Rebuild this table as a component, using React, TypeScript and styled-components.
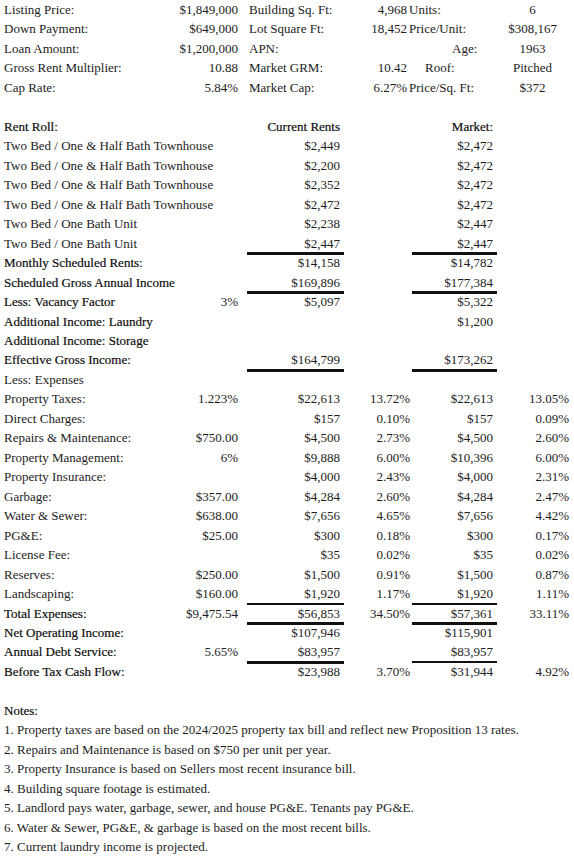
import React from 'react';
import styled, { createGlobalStyle } from 'styled-components';

const GlobalStyle = createGlobalStyle`
  html, body {
    margin: 0;
    padding: 0;
    background: #fff;
  }
  body {
    font-family: 'Liberation Serif', 'Times New Roman', serif;
    font-size: 13px;
    color: #1c1c1c;
  }
`;

const ROW_H = '19.48px';

const Page = styled.div`
  width: 574px;
  display: flex;
  flex-direction: column;
`;

const SummaryRow = styled.div`
  display: grid;
  grid-template-columns: 170px 77px 98px 62px 90px 77px;
  height: ${ROW_H};
`;

const Row = styled.div`
  display: grid;
  grid-template-columns: 170px 77px 97px 68px 85px 77px;
  height: ${ROW_H};
`;

const Blank = styled.div`
  height: ${ROW_H};
`;

type CellProps = {
  $align?: 'left' | 'right' | 'center';
  $padL?: number;
  $padR?: number;
  $bar?: number;
  $strong?: boolean;
  $span?: number;
};

const Cell = styled.div<CellProps>`
  grid-column: span ${p => p.$span ?? 1};
  line-height: ${ROW_H};
  white-space: nowrap;
  text-align: ${p => p.$align ?? 'left'};
  padding-left: ${p => p.$padL ?? 0}px;
  padding-right: ${p => p.$padR ?? 0}px;
  box-sizing: border-box;
  color: ${p => (p.$strong ? '#0d0d0d' : 'inherit')};
  -webkit-text-stroke: ${p => (p.$strong ? '0.2px currentColor' : '0')};
  box-shadow: ${p =>
    p.$bar
      ? `0 -${Math.floor(p.$bar / 2)}px 0 #111, inset 0 ${Math.ceil(p.$bar / 2)}px 0 #111`
      : 'none'};
`;

const Label = (props: { children?: React.ReactNode; strong?: boolean }) => (
  <Cell $padL={4} $strong={props.strong}>
    {props.children}
  </Cell>
);

type Summary = [string, string, string, string, string, string, number?];

const summary: Summary[] = [
  ['Listing Price:', '$1,849,000', 'Building Sq. Ft:', '4,968', 'Units:', '6'],
  ['Down Payment:', '$649,000', 'Lot Square Ft:', '18,452', 'Price/Unit:', '$308,167'],
  ['Loan Amount:', '$1,200,000', 'APN:', '', 'Age:', '1963', 45],
  ['Gross Rent Multiplier:', '10.88', 'Market GRM:', '10.42', 'Roof:', 'Pitched', 18],
  ['Cap Rate:', '5.84%', 'Market Cap:', '6.27%', 'Price/Sq. Ft:', '$372'],
];

type Line = {
  label: string;
  strong?: boolean;
  input?: string;
  cur?: string;
  curPct?: string;
  mkt?: string;
  mktPct?: string;
  curBar?: number;
  mktBar?: number;
};

const townhouse = 'Two Bed / One & Half Bath Townhouse';
const oneBath = 'Two Bed / One Bath Unit';

const lines: Line[] = [
  { label: townhouse, cur: '$2,449', mkt: '$2,472' },
  { label: townhouse, cur: '$2,200', mkt: '$2,472' },
  { label: townhouse, cur: '$2,352', mkt: '$2,472' },
  { label: townhouse, cur: '$2,472', mkt: '$2,472' },
  { label: oneBath, cur: '$2,238', mkt: '$2,447' },
  { label: oneBath, cur: '$2,447', mkt: '$2,447' },
  { label: 'Monthly Scheduled Rents:', strong: true, cur: '$14,158', mkt: '$14,782', curBar: 3, mktBar: 3 },
  { label: 'Scheduled Gross Annual Income', strong: true, cur: '$169,896', mkt: '$177,384' },
  { label: 'Less: Vacancy Factor', strong: true, input: '3%', cur: '$5,097', mkt: '$5,322', curBar: 3, mktBar: 3 },
  { label: 'Additional Income: Laundry', strong: true, mkt: '$1,200' },
  { label: 'Additional Income: Storage', strong: true },
  { label: 'Effective Gross Income:', strong: true, cur: '$164,799', mkt: '$173,262' },
  { label: 'Less: Expenses', curBar: 3, mktBar: 3 },
  { label: 'Property Taxes:', input: '1.223%', cur: '$22,613', curPct: '13.72%', mkt: '$22,613', mktPct: '13.05%' },
  { label: 'Direct Charges:', cur: '$157', curPct: '0.10%', mkt: '$157', mktPct: '0.09%' },
  { label: 'Repairs & Maintenance:', input: '$750.00', cur: '$4,500', curPct: '2.73%', mkt: '$4,500', mktPct: '2.60%' },
  { label: 'Property Management:', input: '6%', cur: '$9,888', curPct: '6.00%', mkt: '$10,396', mktPct: '6.00%' },
  { label: 'Property Insurance:', cur: '$4,000', curPct: '2.43%', mkt: '$4,000', mktPct: '2.31%' },
  { label: 'Garbage:', input: '$357.00', cur: '$4,284', curPct: '2.60%', mkt: '$4,284', mktPct: '2.47%' },
  { label: 'Water & Sewer:', input: '$638.00', cur: '$7,656', curPct: '4.65%', mkt: '$7,656', mktPct: '4.42%' },
  { label: 'PG&E:', input: '$25.00', cur: '$300', curPct: '0.18%', mkt: '$300', mktPct: '0.17%' },
  { label: 'License Fee:', cur: '$35', curPct: '0.02%', mkt: '$35', mktPct: '0.02%' },
  { label: 'Reserves:', input: '$250.00', cur: '$1,500', curPct: '0.91%', mkt: '$1,500', mktPct: '0.87%' },
  { label: 'Landscaping:', input: '$160.00', cur: '$1,920', curPct: '1.17%', mkt: '$1,920', mktPct: '1.11%' },
  { label: 'Total Expenses:', strong: true, input: '$9,475.54', cur: '$56,853', curPct: '34.50%', mkt: '$57,361', mktPct: '33.11%', curBar: 2, mktBar: 2 },
  { label: 'Net Operating Income:', strong: true, cur: '$107,946', mkt: '$115,901', curBar: 3, mktBar: 3 },
  { label: 'Annual Debt Service:', strong: true, input: '5.65%', cur: '$83,957', mkt: '$83,957' },
  { label: 'Before Tax Cash Flow:', strong: true, cur: '$23,988', curPct: '3.70%', mkt: '$31,944', mktPct: '4.92%', curBar: 3, mktBar: 2 },
];

const notes = [
  '1. Property taxes are based on the 2024/2025 property tax bill and reflect new Proposition 13 rates.',
  '2. Repairs and Maintenance is based on $750 per unit per year.',
  '3. Property Insurance is based on Sellers most recent insurance bill.',
  '4. Building square footage is estimated.',
  '5. Landlord pays water, garbage, sewer, and house PG&E. Tenants pay PG&E.',
  '6. Water & Sewer, PG&E, & garbage is based on the most recent bills.',
  '7. Current laundry income is projected.',
];

export default function App() {
  return (
    <Page>
      <GlobalStyle />
      {summary.map(([l1, v1, l2, v2, l3, v3, indent], i) => (
        <SummaryRow key={i}>
          <Label>{l1}</Label>
          <Cell $align="right" $padR={9}>{v1}</Cell>
          <Cell $padL={2}>{l2}</Cell>
          <Cell $align="right" $padR={0}>{v2}</Cell>
          <Cell $padL={indent ?? 2}>{l3}</Cell>
          <Cell $align="center" $padR={6}>{v3}</Cell>
        </SummaryRow>
      ))}
      <Blank />
      <Row>
        <Label strong>Rent Roll:</Label>
        <Cell />
        <Cell $align="right" $padR={4} $strong>Current Rents</Cell>
        <Cell />
        <Cell $align="right" $padR={4} $strong>Market:</Cell>
        <Cell />
      </Row>
      {lines.map((r, i) => (
        <Row key={i}>
          <Label strong={r.strong}>{r.label}</Label>
          <Cell $align="right" $padR={9}>{r.input}</Cell>
          <Cell $align="right" $padR={4} $bar={r.curBar}>{r.cur}</Cell>
          <Cell $align="right" $padR={2}>{r.curPct}</Cell>
          <Cell $align="right" $padR={4} $bar={r.mktBar}>{r.mkt}</Cell>
          <Cell $align="right" $padR={5}>{r.mktPct}</Cell>
        </Row>
      ))}
      <Blank />
      <Row>
        <Cell $span={6} $padL={4} $strong>Notes:</Cell>
      </Row>
      {notes.map((n, i) => (
        <Row key={i}>
          <Cell $span={6} $padL={4}>{n}</Cell>
        </Row>
      ))}
    </Page>
  );
}
